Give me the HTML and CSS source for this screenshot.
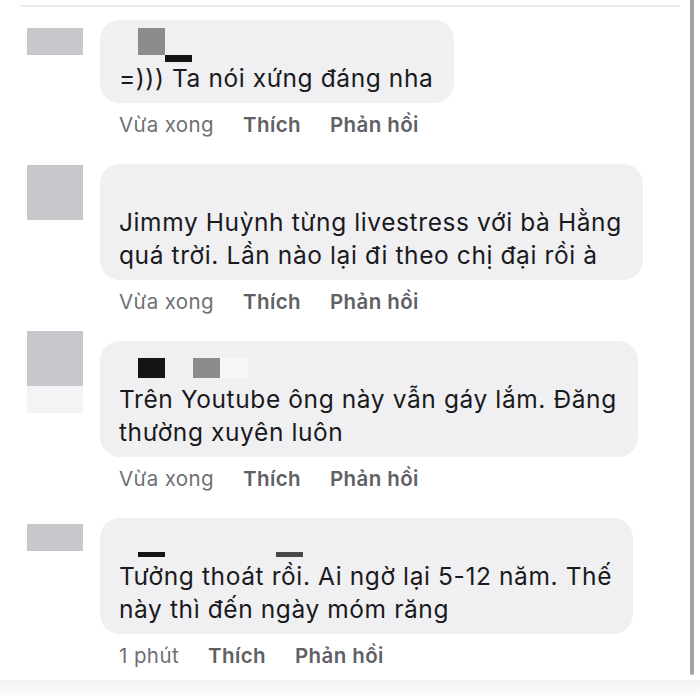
FILE: index.html
```html
<!DOCTYPE html>
<html lang="vi">
<head>
<meta charset="utf-8">
<title>Bình luận</title>
<link rel="stylesheet" href="styles.css">
</head>
<body>
<div class="page">
  <div class="viewport">
    <div class="feed">
      <div class="divider"></div>

      <div class="comment c1">
        <div class="avatar"></div>
        <div class="body">
          <div class="bubble">
            <div class="name">
              <span class="px px-mid n1a"></span>
              <span class="px px-black n1b"></span>
            </div>
            <p class="text">=))) Ta nói xứng đáng nha</p>
          </div>
          <div class="actions">
            <span class="time">Vừa xong</span>
            <span class="act">Thích</span>
            <span class="act">Phản hồi</span>
          </div>
        </div>
      </div>

      <div class="comment c2">
        <div class="avatar"></div>
        <div class="body">
          <div class="bubble">
            <div class="name"></div>
            <p class="text">Jimmy Huỳnh từng livestress với bà Hằng<br>quá trời. Lần nào lại đi theo chị đại rồi à</p>
          </div>
          <div class="actions">
            <span class="time">Vừa xong</span>
            <span class="act">Thích</span>
            <span class="act">Phản hồi</span>
          </div>
        </div>
      </div>

      <div class="comment c3">
        <div class="avatar"></div>
        <div class="body">
          <div class="bubble">
            <div class="name">
              <span class="px px-black n3a"></span>
              <span class="px px-mid n3b"></span>
              <span class="px px-faint n3c"></span>
            </div>
            <p class="text">Trên Youtube ông này vẫn gáy lắm. Đăng<br>thường xuyên luôn</p>
          </div>
          <div class="actions">
            <span class="time">Vừa xong</span>
            <span class="act">Thích</span>
            <span class="act">Phản hồi</span>
          </div>
        </div>
      </div>

      <div class="comment c4">
        <div class="avatar"></div>
        <div class="body">
          <div class="bubble">
            <div class="name">
              <span class="px px-black n4a"></span>
              <span class="px px-dark n4b"></span>
            </div>
            <p class="text">Tưởng thoát rồi. Ai ngờ lại 5-12 năm. Thế<br>này thì đến ngày móm răng</p>
          </div>
          <div class="actions">
            <span class="time">1 phút</span>
            <span class="act">Thích</span>
            <span class="act">Phản hồi</span>
          </div>
        </div>
      </div>
    </div>
    <div class="scroll-track">
      <div class="scroll-thumb"></div>
    </div>
  </div>
  <div class="bottom-strip"></div>
</div>
</body>
</html>
```

FILE: styles.css
```css
* {
  box-sizing: border-box;
}

html, body {
  margin: 0;
  padding: 0;
  background: #ffffff;
}

body {
  font-family: Inter, "Noto Sans", "DejaVu Sans", sans-serif;
  color: #1c1c1e;
}

.page {
  width: 700px;
  height: 694px;
  display: flex;
  flex-direction: column;
  overflow: hidden;
}

.viewport {
  height: 680px;
  display: flex;
  flex-direction: row;
}

.feed {
  width: 690px;
  padding-top: 5px;
}

.divider {
  margin-left: 20px;
  width: 660px;
  height: 2px;
  background: #ececee;
  margin-bottom: 13px;
}

.comment {
  display: flex;
  align-items: flex-start;
  padding-left: 27px;
  margin-bottom: 25px;
}

.avatar {
  width: 56px;
  height: 27px;
  background: #c8c8cc;
  flex-shrink: 0;
}

.c1 .avatar {
  margin-top: 8px;
}

.c2 .avatar {
  margin-top: 1px;
  height: 55px;
}

.c3 .avatar {
  margin-top: -10px;
  height: 82px;
  background: linear-gradient(to bottom, #c8c8cc 0, #c8c8cc 55px, #f4f4f6 55px, #f4f4f6 82px);
}

.c4 .avatar {
  margin-top: 6px;
}

.body {
  margin-left: 17px;
  display: flex;
  flex-direction: column;
  align-items: flex-start;
}

.bubble {
  background: #f0f0f3;
  border-radius: 20px;
  padding: 10px 21px 8px 19px;
  white-space: nowrap;
}

.name {
  position: relative;
  height: 32px;
}

.px {
  position: absolute;
  display: block;
}

.px-black {
  background: #141414;
}

.px-mid {
  background: #8c8c8f;
}

.px-dark {
  background: #47474a;
}

.px-faint {
  background: #f7f7f9;
}

.n1a {
  left: 19px;
  top: -2px;
  width: 27px;
  height: 27px;
}

.n1b {
  left: 46px;
  top: 25px;
  width: 27px;
  height: 7px;
}

.n3a {
  left: 19px;
  top: 7px;
  width: 27px;
  height: 20px;
}

.n3b {
  left: 74px;
  top: 7px;
  width: 27px;
  height: 20px;
}

.n3c {
  left: 101px;
  top: 7px;
  width: 28px;
  height: 20px;
}

.n4a {
  left: 19px;
  top: 24px;
  width: 27px;
  height: 5px;
}

.n4b {
  left: 157px;
  top: 24px;
  width: 27px;
  height: 5px;
}

.text {
  margin: 0;
  font-size: 24.5px;
  line-height: 33px;
  letter-spacing: 0.6px;
  color: #1a1a1c;
}

.actions {
  display: flex;
  gap: 29px;
  margin-top: 8px;
  padding-left: 19px;
  font-size: 20.5px;
  line-height: 28px;
  letter-spacing: 0.4px;
}

.time {
  color: #6f6f74;
}

.act {
  color: #606065;
  font-weight: 600;
}

.scroll-track {
  width: 10px;
}

.scroll-thumb {
  width: 4px;
  height: 675px;
  background: #a4a4a6;
  border-radius: 0 0 2px 2px;
}

.bottom-strip {
  height: 14px;
  background: linear-gradient(to bottom, #f3f3f4, #fafafa);
}
```
